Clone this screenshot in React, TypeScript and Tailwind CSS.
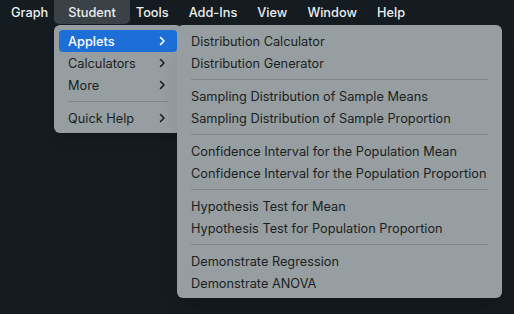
import { Fragment } from 'react'

const font = { fontFamily: 'Inter, "Noto Sans", sans-serif' }

function Chevron() {
  return (
    <svg width="7" height="10" viewBox="0 0 7 10" className="shrink-0">
      <path d="M1.5 1.5 L5 5 L1.5 8.5" fill="none" stroke="currentColor" strokeWidth="1.6" strokeLinecap="round" strokeLinejoin="round" />
    </svg>
  )
}

const topMenus = ['Graph', 'Student', 'Tools', 'Add-Ins', 'View', 'Window', 'Help']

const studentItems: (string | null)[] = ['Applets', 'Calculators', 'More', null, 'Quick Help']

const appletGroups = [
  ['Distribution Calculator', 'Distribution Generator'],
  ['Sampling Distribution of Sample Means', 'Sampling Distribution of Sample Proportion'],
  ['Confidence Interval for the Population Mean', 'Confidence Interval for the Population Proportion'],
  ['Hypothesis Test for Mean', 'Hypothesis Test for Population Proportion'],
  ['Demonstrate Regression', 'Demonstrate ANOVA'],
]

export default function App() {
  return (
    <div className="w-[514px] h-[314px] bg-[#141c22] overflow-hidden" style={font}>
      {/* menu bar */}
      <div className="flex h-[24px] items-center pl-[11px] gap-[20px] text-[12.75px] text-[#eceeef] font-medium">
        {topMenus.map(m => (
          <div
            key={m}
            className={
              m === 'Student'
                ? 'h-full flex items-center pt-px -mx-[14px] px-[14px] rounded-b-[5px] bg-[#3a4248]'
                : 'h-full flex items-center pt-px'
            }
          >
            {m}
          </div>
        ))}
      </div>

      <div className="flex items-start mt-[1px] text-[12.75px]">
        {/* Student dropdown */}
        <div className="ml-[54px] w-[128px] rounded-[6px] bg-[#969ea1] pt-[5px] pb-[4px] text-[#1b1f22] shadow-lg">
          {studentItems.map((it, i) =>
            it === null ? (
              <div key={i} className="h-[11px] flex items-center px-[14px]">
                <div className="h-px w-full bg-[#7d8588]" />
              </div>
            ) : (
              <div
                key={i}
                className={
                  it === 'Applets'
                    ? 'mx-[5px] h-[22px] flex items-center justify-between pl-[9px] pr-[11px] rounded-[4px] bg-[#1d6ed6] text-white font-medium'
                    : 'mx-[5px] h-[22px] flex items-center justify-between pl-[9px] pr-[11px]'
                }
              >
                <span className="pt-px">{it}</span>
                <Chevron />
              </div>
            )
          )}
        </div>

        {/* Applets submenu */}
        <div className="-ml-[5px] w-[325px] rounded-[6px] bg-[#969ea1] pt-[5px] pb-[4px] text-[#1b1f22] shadow-xl relative">
          {appletGroups.map((g, gi) => (
            <Fragment key={gi}>
              {gi > 0 && (
                <div className="h-[11px] flex items-center pl-[14px] pr-[14px]">
                  <div className="h-px w-full bg-[#7d8588]" />
                </div>
              )}
              {g.map(t => (
                <div key={t} className="h-[22px] flex items-center pt-px pl-[14px] whitespace-nowrap">
                  {t}
                </div>
              ))}
            </Fragment>
          ))}
        </div>
      </div>
    </div>
  )
}
